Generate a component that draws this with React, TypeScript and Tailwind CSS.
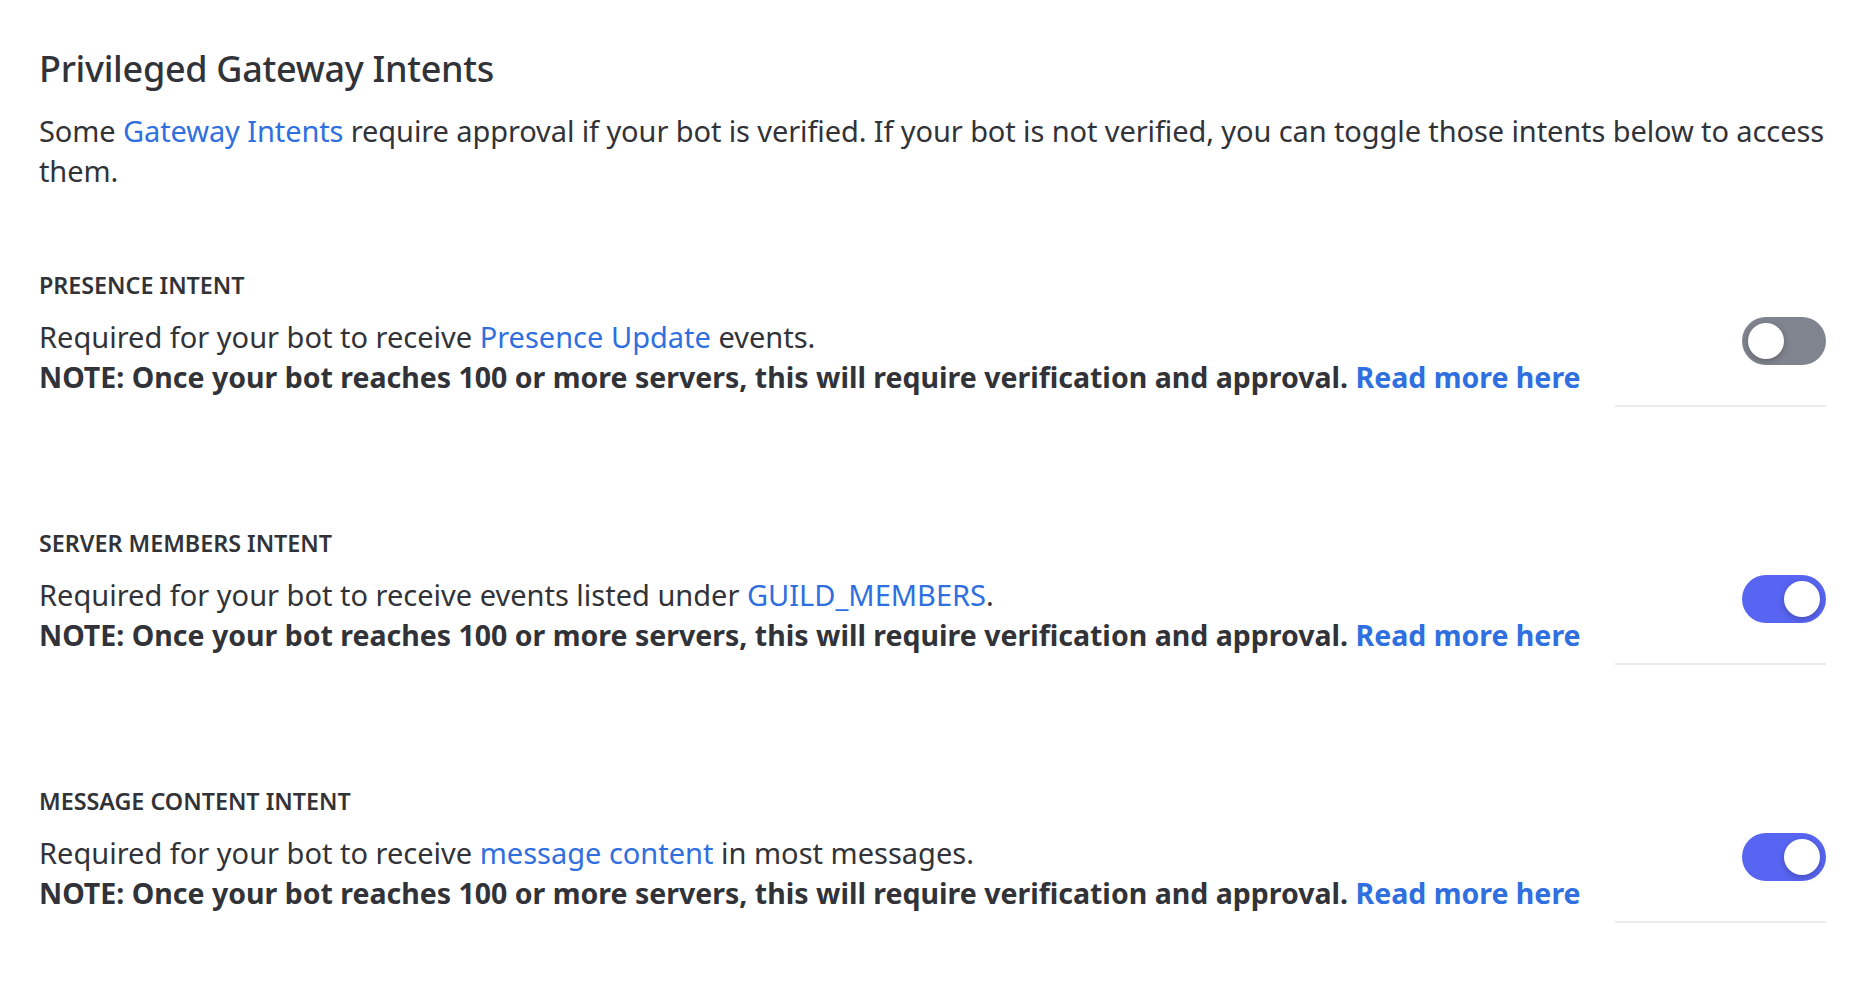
import React from 'react';

type Intent = {
    id: string;
    label: string;
    before: string;
    link: string;
    after: string;
    enabled: boolean;
};

const intents: Intent[] = [
    { id: 'presence', label: 'Presence Intent', before: 'Required for your bot to receive ', link: 'Presence Update', after: ' events.', enabled: false },
    { id: 'members', label: 'Server Members Intent', before: 'Required for your bot to receive events listed under ', link: 'GUILD_MEMBERS', after: '.', enabled: true },
    { id: 'content', label: 'Message Content Intent', before: 'Required for your bot to receive ', link: 'message content', after: ' in most messages.', enabled: true },
];

const Toggle: React.FC<{ on: boolean }> = ({ on }) => (
    <div
        className={
            on
                ? 'flex h-[48px] w-[84px] items-center justify-end rounded-full bg-[#5865f2] px-[6px]'
                : 'flex h-[48px] w-[84px] items-center justify-start rounded-full bg-[#80848e] px-[6px]'
        }
    >
        <div className="h-[36px] w-[36px] rounded-full bg-white shadow-[0_2px_6px_rgba(0,0,0,0.25)]" />
    </div>
);

export default function App() {
    return (
        <div className="min-h-screen bg-white pl-[39px] pr-[40px] pt-[45px] font-['Noto_Sans',sans-serif] text-[#313338]">
            <h2 className="text-[36px] font-medium leading-[48px] tracking-[-0.3px]">Privileged Gateway Intents</h2>
            <p className="mt-[18px] text-[29px] leading-[40px] tracking-[-0.1px]">
                Some <a className="text-[#2f6fe0]">Gateway Intents</a> require approval if your bot is verified. If your bot is not verified, you can toggle those intents below to access them.
            </p>

            {intents.map((intent, i) => (
                <section key={intent.id} className={i === 0 ? 'mt-[79px]' : 'mt-[121px]'}>
                    <h3 className="text-[23.3px] font-semibold uppercase leading-[30px]">{intent.label}</h3>
                    <div className="mt-[17px] flex items-start justify-between">
                        <div className="text-[29px] leading-[40px]">
                            <div>
                                {intent.before}
                                <a className="text-[#2f6fe0]">{intent.link}</a>
                                {intent.after}
                            </div>
                            <div className="text-[28.5px] font-bold">
                                NOTE: Once your bot reaches 100 or more servers, this will require verification and approval.{' '}
                                <a className="text-[#2f6fe0]">Read more here</a>
                            </div>
                        </div>
                        {/* toggle column with its little divider underneath */}
                        <div className="flex w-[211px] shrink-0 flex-col items-end border-b-2 border-[#ebebeb] pb-[40px]">
                            <Toggle on={intent.enabled} />
                        </div>
                    </div>
                </section>
            ))}
        </div>
    );
}
